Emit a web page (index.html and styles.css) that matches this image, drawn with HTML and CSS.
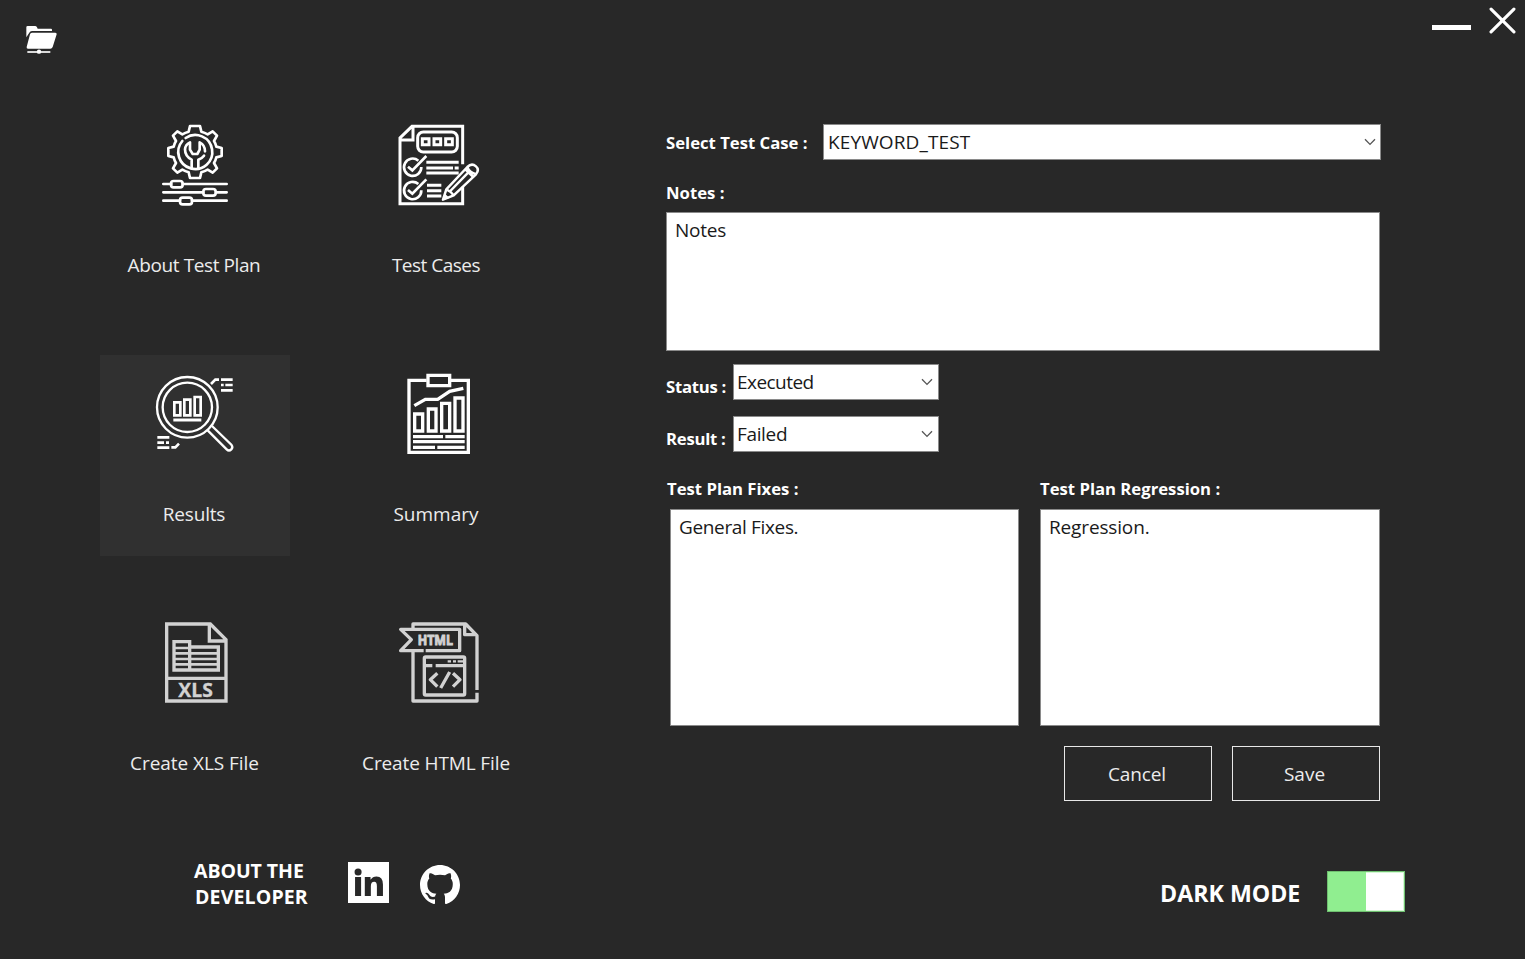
FILE: index.html
```html
<!DOCTYPE html>
<html lang="en">
<head>
<meta charset="utf-8">
<title>Test Plan</title>
<link rel="stylesheet" href="styles.css">
</head>
<body>
<div class="window">
  <header class="titlebar">
    <svg class="folder" viewBox="72 72 108 96">
      <path fill="#fff" d="M79 112V82q0-4 4-4h22q4 0 6 4l2 4h40q3 0 3 3v4H96q-6 0-8 5z"/>
      <path fill="#fff" d="M96 98h70q5 0 4 5l-12 38q-2 5-7 5H84q-5 0-4-5l10-38q1-5 6-5z"/>
      <path stroke="#fff" stroke-width="5" d="M82 156h69"/>
      <circle cx="117" cy="155" r="6.5" fill="#fff"/>
    </svg>
    <div class="controls">
      <span class="minimize"></span>
      <svg class="close" viewBox="0 0 26 26"><path d="M2 2 24 24M24 2 2 24" stroke="#fff" stroke-width="3" stroke-linecap="round"/></svg>
    </div>
  </header>

  <main class="content">
    <nav class="tiles">
      <div class="tile">
        <svg class="icon" viewBox="-15 0 330 330">
          <g fill="none" stroke="#fff" stroke-width="8" stroke-linejoin="round" stroke-linecap="round">
            <path d="M135 48H165L169 65Q179 68 188 73L203 64L216 77L207 93Q212 101 214 110L230 114V138L214 142Q212 151 207 159L216 175L203 188L188 179Q179 184 169 187L165 204H135L131 187Q121 184 112 179L97 188L84 175L93 159Q88 151 86 142L70 138V114L86 110Q88 101 93 93L84 77L97 64L112 73Q121 68 131 65Z"/>
            <path d="M122 84A51 51 0 1 1 112 93"/>
            <path d="M140 175V149Q120 139 120 118Q121 104 135 97V119L143 132H157L164 119V97Q180 105 180 124M160 175V149Q172 144 177 137"/>
            <path d="M55 222H79M113 222H245M55 247H175M213 247H245M55 272H105M141 272H245"/>
            <rect x="78" y="213" width="35" height="19" rx="8"/><rect x="175" y="237" width="37" height="20" rx="8"/><rect x="105" y="263" width="36" height="20" rx="8"/>
          </g>
        </svg>
        <span class="caption about">About Test Plan</span>
      </div>
      <div class="tile">
        <svg class="icon" viewBox="-12 0 330 330">
          <g fill="none" stroke="#fff" stroke-width="9">
            <path d="M233 163V49H81L45 84V281H233V230M45 90H84V49"/>
            <rect x="98" y="66" width="119" height="60" rx="17"/>
            <path d="M112 86h20v18h-20zM147 86h20v18h-20zM182 86h20v18h-20z"/>
            <path d="M100 152A26 26 0 1 0 109 171M69 170 82 181 124 138M100 222A26 26 0 1 0 109 241M69 240 82 251 124 208" stroke-width="8"/>
            <path d="M124 157H221M124 174H204M209 174H221M124 189H221M126 226H169M126 242H169M126 258H169"/>
            <path d="M174 269 184 238 247 171Q260 158 273 169Q284 179 273 193L206 256ZM184 238Q198 244 206 256M193 246 256 181M241 178 265 201M247 171Q253 188 271 192" stroke-width="7.500" stroke-linejoin="round"/>
            <path d="M172 271 179 250 193 264Z" fill="#fff" stroke="none"/>
          </g>
        </svg>
        <span class="caption cases">Test Cases</span>
      </div>
      <div class="tile active">
        <svg class="icon" viewBox="150 42 330 330">
          <g fill="none" stroke="#fff" stroke-width="7">
            <circle cx="292" cy="187" r="91"/><circle cx="292" cy="187" r="74"/>
            <path d="M253 172h18v39h-18zM283 164h18v47h-18zM314 156h18v55h-18z" stroke-width="8"/>
            <path d="M250 225H334" stroke-width="9"/>
            <path d="M353 256 410 313Q417 320 424 313Q430 307 424 299L366 243"/>
            <path d="M363 117 376 104H387M393 104H428M393 120H401M406 120H428M393 136H428M202 277H238M202 293H222M228 293H237M202 308H238M244 307H256L267 296" stroke-width="8"/>
          </g>
        </svg>
        <span class="caption results">Results</span>
      </div>
      <div class="tile">
        <svg class="icon" viewBox="-12 -3 330 330">
          <g fill="none" stroke="#fff" stroke-width="10">
            <path d="M125 61H72V277H250V61H198"/>
            <path d="M129 46H194V77H129Z"/>
            <path d="M88 137 121 118H158L194 94 235 85"/>
            <path d="M89 162h24v51H89zM130 147h23v66h-23zM170 130h24v83h-24zM210 114h24v99h-24z"/>
            <path d="M84 230H174M181 230H239M84 245H239M84 262H150M157 262H239"/>
          </g>
        </svg>
        <span class="caption summary">Summary</span>
      </div>
      <div class="tile">
        <svg class="icon" viewBox="-15 -6 330 330">
          <g fill="none" stroke="#d2d2d2" stroke-width="10">
            <path d="M65 42H196L243 89V273H65ZM193 42V93H243M65 205H243"/>
            <path d="M87 95H134V180H87ZM134 111H220V180H134"/>
            <path d="M87 114H134M87 130H220M87 147H220M87 163H220" stroke-width="8"/>
          </g>
          <text class="icon-text xls" x="100" y="262" textLength="104" lengthAdjust="spacing">XLS</text>
        </svg>
        <span class="caption xls-file">Create XLS File</span>
      </div>
      <div class="tile">
        <svg class="icon" viewBox="-12 -6 330 330">
          <g fill="none" stroke="#d2d2d2" stroke-width="10" stroke-linejoin="round">
            <path d="M84 54V42H242L276 77V240M239 42V74H276M84 124V273H276V248"/>
            <path d="M116 122H47L79 89 47 58H224V122H122"/>
            <rect x="118" y="141" width="121" height="114" rx="4"/>
            <path d="M118 167H142M152 167H239M157 190 136 209 157 230M204 190 225 209 204 230M194 186 167 234"/>
            <path d="M188 154H198M204 154H213M218 154H236" stroke-width="7"/>
          </g>
          <text class="icon-text html" x="98" y="106" textLength="106" lengthAdjust="spacingAndGlyphs">HTML</text>
        </svg>
        <span class="caption html-file">Create HTML File</span>
      </div>
    </nav>

    <section class="form">
      <div class="row case-row">
        <label class="label case-label">Select Test Case :</label>
        <div class="select"><span class="t-keyword">KEYWORD_TEST</span><svg class="chev" viewBox="0 0 12 8"><path d="M1 1.2 6 6.4 11 1.2"/></svg></div>
      </div>
      <label class="label notes-label">Notes :</label>
      <div class="box notes"><span class="t-notes">Notes</span></div>
      <div class="row small">
        <label class="label">Status :</label>
        <div class="select"><span class="t-exec">Executed</span><svg class="chev" viewBox="0 0 12 8"><path d="M1 1.2 6 6.4 11 1.2"/></svg></div>
      </div>
      <div class="row small">
        <label class="label">Result :</label>
        <div class="select"><span class="t-failed">Failed</span><svg class="chev" viewBox="0 0 12 8"><path d="M1 1.2 6 6.4 11 1.2"/></svg></div>
      </div>
      <div class="pair">
        <div class="field fixes">
          <label class="label fixes-label">Test Plan Fixes :</label>
          <div class="box"><span class="t-fixes">General Fixes.</span></div>
        </div>
        <div class="field">
          <label class="label regr-label">Test Plan Regression :</label>
          <div class="box"><span class="t-regr">Regression.</span></div>
        </div>
      </div>
      <div class="buttons">
        <div class="button"><span class="t-cancel">Cancel</span></div>
        <div class="button"><span class="t-save">Save</span></div>
      </div>
    </section>
  </main>

  <footer class="footer">
    <div class="developer"><span class="dev1">ABOUT THE</span><span class="dev2">DEVELOPER</span></div>
    <svg class="linkedin" viewBox="0 0 122 122">
      <rect width="122" height="122" fill="#fff"/>
      <g fill="#282828"><circle cx="30" cy="30" r="10.500"/><path d="M21 45H39V101H21ZM50 45H67V53Q73 43 85 43Q104 43 104 67V101H86V72Q86 59 78 59Q68 59 68 72V101H50Z"/></g>
    </svg>
    <svg class="github" viewBox="0 0 16 16"><path fill="#fff" d="M8 0C3.58 0 0 3.58 0 8c0 3.540 2.290 6.530 5.470 7.590.4.070.550-.170.550-.380 0-.190-.010-.820-.010-1.490-2.010.370-2.530-.490-2.690-.940-.090-.230-.480-.940-.820-1.130-.280-.150-.680-.520-.010-.530.630-.010 1.080.580 1.230.820.720 1.210 1.870.870 2.330.660.070-.520.280-.870.510-1.070-1.780-.200-3.640-.890-3.640-3.950 0-.870.310-1.590.820-2.150-.080-.200-.360-1.020.080-2.120 0 0 .670-.210 2.200.820.640-.180 1.320-.270 2-.270s1.360.090 2 .270c1.530-1.040 2.200-.820 2.200-.820.440 1.100.160 1.920.080 2.120.510.560.820 1.270.820 2.150 0 3.070-1.870 3.750-3.650 3.950.290.250.540.730.540 1.480 0 1.070-.010 1.930-.010 2.200 0 .210.150.460.550.380A8.010 8.010 0 0 0 16 8c0-4.420-3.580-8-8-8z"/></svg>
    <span class="mode">DARK MODE</span>
    <div class="toggle"><div class="knob"></div></div>
  </footer>
</div>
</body>
</html>
```
FILE: styles.css
```css
* { box-sizing: border-box; }
body { margin: 0; background: #282828; }
.window {
  width: 1525px; height: 959px; overflow: hidden;
  display: flex; flex-direction: column;
  background: #282828; color: #fff;
  font-family: "Open Sans", "Noto Sans", sans-serif;
  font-size: 19px; line-height: 26px; white-space: nowrap;
}
.titlebar { height: 106px; display: flex; justify-content: space-between; align-items: flex-start; }
.folder { width: 36px; height: 32px; margin: 24px 0 0 24px; }
.controls { display: flex; padding: 7px 9px 0 0; }
.minimize { width: 39px; height: 5px; margin: 18px 18px 0 0; background: #fff; }
.close { width: 27px; height: 27px; fill: none; }

.content { height: 746px; display: flex; padding-left: 100px; }
.tiles {
  width: 566px; display: grid;
  grid-template-columns: 190px 190px; grid-auto-rows: 201px;
  column-gap: 51px; row-gap: 48px;
}
.tile { display: flex; flex-direction: column; align-items: center; padding-top: 4px; }
.active { background: #303030; }
.icon { width: 110px; height: 110px; display: block; }
.caption { margin-top: 32px; color: #ececec; }
.about { padding-right: 2px; letter-spacing: -0.4px; }
.cases { letter-spacing: -0.5px; }
.results { padding-right: 2px; letter-spacing: -0.2px; }
.xls-file { padding-right: 1px; letter-spacing: -0.05px; }
.html-file { letter-spacing: -0.12px; }
.icon-text { fill: #d2d2d2; font-family: "Open Sans", sans-serif; font-weight: 700; stroke: #d2d2d2; }
.xls { font-size: 58px; stroke-width: 1px; }
.html { font-size: 44px; stroke-width: 3px; }

.form { width: 715px; padding-top: 18px; display: flex; flex-direction: column; }
.row { display: flex; height: 36px; }
.case-row { margin-bottom: 20px; }
.label { font-size: 16.700px; font-weight: 700; line-height: 26px; }
.row .label { padding-top: 6px; }
.case-label { width: 157px; }
.select {
  flex: 1; height: 36px; padding: 0 4px;
  display: flex; align-items: center; justify-content: space-between;
  background: #fff; border: 1px solid #8a8a8a; color: #1a1a1a;
}
.t-keyword { letter-spacing: 0.12px; }
.t-exec { letter-spacing: -0.55px; }
.t-failed { letter-spacing: -0.35px; }
.t-notes { letter-spacing: -0.25px; }
.t-fixes { letter-spacing: -0.35px; }
.t-regr { letter-spacing: -0.15px; }
.chev { width: 12px; height: 8px; fill: none; stroke: #555; stroke-width: 1.300; }
.box { background: #fff; border: 1px solid #8a8a8a; color: #1a1a1a; padding: 4px 8px; }
.notes-label { height: 32px; }
.notes { width: 714px; height: 139px; margin-bottom: 13px; }
.small { width: 273px; margin-bottom: 16px; }
.small .select { padding-left: 3px; padding-right: 5px; }
.small .label { width: 67px; padding-top: 10px; letter-spacing: -0.25px; }
.pair { display: flex; width: 714px; justify-content: space-between; margin-top: 8px; }
.field { width: 340px; display: flex; flex-direction: column; }
.field .label { height: 33px; }
.field .box { height: 217px; }
.fixes { width: 353px; }
.fixes .label { padding-left: 1px; }
.fixes .box { margin-left: 4px; }
.buttons { display: flex; justify-content: flex-end; gap: 20px; width: 714px; margin-top: 20px; }
.button {
  width: 148px; height: 55px; border: 1px solid #e8e8e8; color: #ececec;
  display: flex; align-items: center; justify-content: center; padding-right: 3px;
}
.t-cancel { padding-left: 1px; letter-spacing: -0.1px; }

.footer { display: flex; align-items: flex-start; padding: 5px 0 0 194px; }
.developer { display: flex; flex-direction: column; width: 154px; margin-top: 1px; font-weight: 700; font-size: 19.500px; }
.dev1 { letter-spacing: -0.05px; }
.dev2 { padding-left: 1px; letter-spacing: 0.15px; }
.linkedin { width: 41px; height: 41px; margin-top: 5px; }
.github { width: 40px; height: 40px; margin: 8px 0 0 31px; }
.mode { width: 167px; margin: 23px 0 0 700px; font-size: 23.200px; font-weight: 700; }
.toggle { width: 78px; height: 41px; margin-top: 14px; background: #90ee90; border: 1px solid #6fc070; display: flex; justify-content: flex-end; }
.knob { width: 38px; background: #fff; border: 1px solid #d5f8d5; border-left: 0; }
```
